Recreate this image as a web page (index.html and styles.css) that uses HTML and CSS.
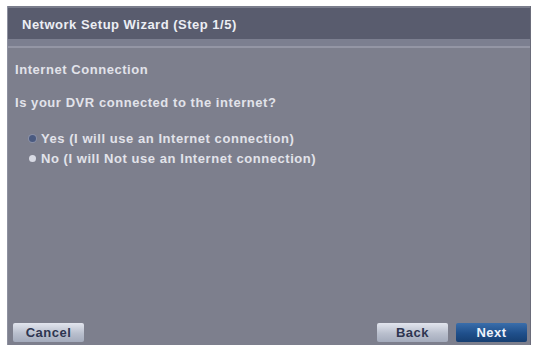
FILE: index.html
```html
<!DOCTYPE html>
<html>
<head>
<meta charset="utf-8">
<link rel="stylesheet" href="styles.css">
</head>
<body>
<div class="panel">
  <div class="titlebar">Network Setup Wizard (Step 1/5)</div>
  <div class="subbar"></div>
  <div class="content">
    <div class="heading">Internet Connection</div>
    <div class="question">Is your DVR connected to the internet?</div>
    <div class="options">
      <div class="option"><span class="radio checked"></span>Yes (I will use an Internet connection)</div>
      <div class="option"><span class="radio"></span>No (I will Not use an Internet connection)</div>
    </div>
  </div>
  <div class="footer">
    <button class="btn">Cancel</button>
    <div class="spacer"></div>
    <button class="btn">Back</button>
    <button class="btn primary">Next</button>
  </div>
</div>
</body>
</html>
```

FILE: styles.css
```css
html, body {
  margin: 0;
  background: #ffffff;
}
body {
  padding: 6px 3px 3px 7px;
  font-family: "Liberation Sans", Arial, sans-serif;
}
.panel {
  width: 524px;
  height: 339px;
  display: flex;
  flex-direction: column;
  background: #7d7f8d;
  border-left: 1px solid #8e91a0;
  border-right: 1px solid #6a6c7a;
  box-sizing: border-box;
}
.titlebar {
  height: 33px;
  background: #595c6e;
  border-top: 2px solid #7a7d8c;
  box-sizing: border-box;
  color: #eceef4;
  font-weight: bold;
  font-size: 13px;
  letter-spacing: 0.5px;
  padding-left: 14px;
  display: flex;
  align-items: center;
  padding-top: 2px;
}
.subbar {
  height: 7px;
  background: #7c7f90;
  border-bottom: 2px solid #9496a5;
}
.content {
  flex: 1;
  padding: 14px 8px 0 7px;
  color: #e2e3ea;
  font-size: 13px;
  font-weight: bold;
  letter-spacing: 0.55px;
}
.heading {
  height: 16px;
  line-height: 16px;
}
.question {
  margin-top: 17px;
  height: 16px;
  line-height: 16px;
}
.options {
  margin-top: 17px;
  padding-left: 14px;
}
.option {
  display: flex;
  align-items: center;
  height: 20px;
}
.radio {
  width: 7px;
  height: 7px;
  border-radius: 50%;
  background: #d8dae4;
  margin-right: 5px;
}
.radio.checked {
  background: #4a5a80;
  box-shadow: 0 0 0 1px #8a90a8;
}
.footer {
  display: flex;
  align-items: center;
  padding: 0 3px 3px 5px;
  gap: 8px;
}
.spacer {
  flex: 1;
}
.btn {
  width: 71px;
  height: 19px;
  border: none;
  border-radius: 2px;
  font-family: "Liberation Sans", Arial, sans-serif;
  font-weight: bold;
  font-size: 13px;
  letter-spacing: 0.5px;
  color: #2e3550;
  background: linear-gradient(#e2e5ee, #b9bfcd 55%, #a4abbc);
  padding: 0;
}
.btn.primary {
  color: #eef2fa;
  background: linear-gradient(#3a6eab, #1f4f8b 55%, #163f72);
}
```
